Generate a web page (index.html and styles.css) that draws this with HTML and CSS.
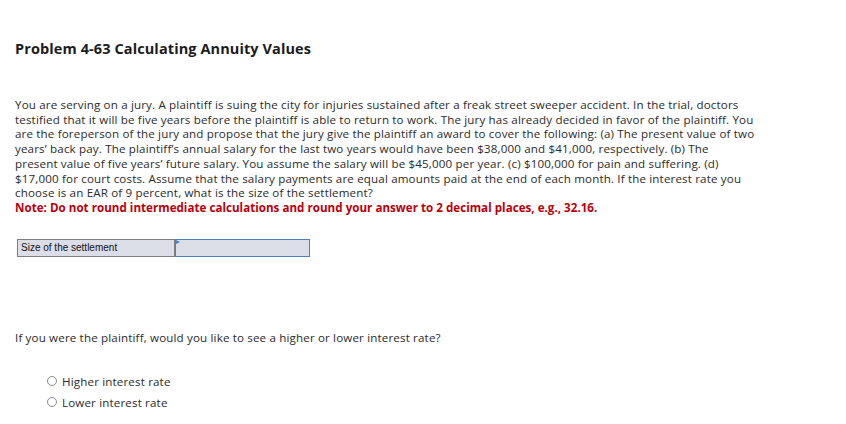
FILE: index.html
```html
<!DOCTYPE html>
<html>
<head>
<meta charset="utf-8">
<link rel="stylesheet" href="styles.css">
</head>
<body>
<div class="page">
  <h1 class="title">Problem 4-63 Calculating Annuity Values</h1>
  <p class="problem">You are serving on a jury. A plaintiff is suing the city for injuries sustained after a freak street sweeper accident. In the trial, doctors<br>testified that it will be five years before the plaintiff is able to return to work. The jury has already decided in favor of the plaintiff. You<br>are the foreperson of the jury and propose that the jury give the plaintiff an award to cover the following: (a) The present value of two<br>years’ back pay. The plaintiff’s annual salary for the last two years would have been $38,000 and $41,000, respectively. (b) The<br>present value of five years’ future salary. You assume the salary will be $45,000 per year. (c) $100,000 for pain and suffering. (d)<br>$17,000 for court costs. Assume that the salary payments are equal amounts paid at the end of each month. If the interest rate you<br>choose is an EAR of 9 percent, what is the size of the settlement?<br><span class="note">Note: Do not round intermediate calculations and round your answer to 2 decimal places, e.g., 32.16.</span></p>
  <div class="answer">
    <div class="label">Size of the settlement</div>
    <div class="field"><span class="marker"></span></div>
  </div>
  <p class="question">If you were the plaintiff, would you like to see a higher or lower interest rate?</p>
  <div class="options">
    <label class="option"><span class="radio"></span>Higher interest rate</label>
    <label class="option"><span class="radio"></span>Lower interest rate</label>
  </div>
</div>
</body>
</html>
```
FILE: styles.css
```css
html, body {
  margin: 0;
  padding: 0;
  background: #ffffff;
}
.page {
  padding: 40px 0 0 15px;
  font-family: "Open Sans", "Lato", sans-serif;
  color: #2b2b2b;
}
.title {
  margin: 0;
  font-size: 14.5px;
  font-weight: 700;
  color: #1c1c1c;
  line-height: 18px;
  letter-spacing: 0.1px;
}
.problem {
  margin: 40px 0 0 0;
  font-size: 11.6px;
  line-height: 14.7px;
  letter-spacing: 0.15px;
  white-space: nowrap;
}
.note {
  color: #b8000b;
  font-weight: 700;
  letter-spacing: 0.02px;
}
.answer {
  display: flex;
  margin: 23px 0 0 2px;
  width: 293px;
  height: 18px;
}
.label {
  border: 1px solid #7f7f7f;
  background: #dcdee7;
  font-family: "Liberation Sans", Arial, sans-serif;
  font-size: 10px;
  line-height: 16px;
  padding-left: 3px;
  color: #111;
  box-sizing: border-box;
  width: 158px;
}
.field {
  flex: 1;
  border: 1px solid #4f7fc1;
  background: #dcdee7;
  position: relative;
  box-sizing: border-box;
}
.marker {
  position: absolute;
  left: 0;
  top: 0;
  width: 0;
  height: 0;
  border-top: 2px solid transparent;
  border-bottom: 2px solid transparent;
  border-left: 4px solid #4f7fc1;
}
.question {
  margin: 73px 0 0 0;
  font-size: 11.6px;
  line-height: 15px;
  letter-spacing: 0.15px;
}
.options {
  display: flex;
  flex-direction: column;
  gap: 6px;
  margin: 29px 0 0 31px;
}
.option {
  display: flex;
  align-items: center;
  font-size: 11.6px;
  line-height: 15px;
  letter-spacing: 0.15px;
}
.radio {
  width: 10px;
  height: 10px;
  border: 1px solid #8a8a8a;
  border-radius: 50%;
  margin-right: 5px;
  margin-left: 1px;
  box-sizing: border-box;
}
```
